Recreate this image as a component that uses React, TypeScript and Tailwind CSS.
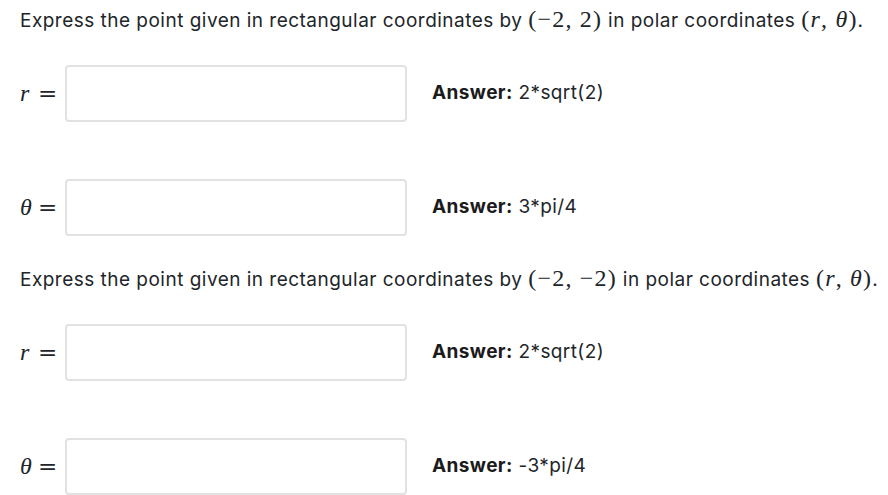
import React from "react";

const M = ({ children }: { children: React.ReactNode }) => (
  <span className="text-[24px] leading-none tracking-[1.2px]" style={{ fontFamily: '"Liberation Serif", serif' }}>
    {children}
  </span>
);
const I = ({ children }: { children: React.ReactNode }) => <i>{children}</i>;

function Label({ sym }: { sym: string }) {
  return (
    <div className="w-[45px] flex items-center text-[#212529]">
      <span className="text-[24px] italic w-[18px]" style={{ fontFamily: '"Liberation Serif", serif' }}>
        {sym}
      </span>
      <span className="text-[23px] leading-none" style={{ fontFamily: '"DejaVu Serif", serif' }}>
        =
      </span>
    </div>
  );
}

function Row({ sym, answer }: { sym: string; answer: string }) {
  return (
    <div className="flex items-center h-[56px]">
      <Label sym={sym} />
      <input
        className="w-[342px] h-[57px] border-2 border-[#e2e2e2] rounded-[4px] bg-white outline-none"
        type="text"
      />
      <div className="ml-[25px] text-[19px] tracking-[0.4px] text-[#212529]">
        <span className="font-bold text-[#1b1b1b]">Answer:</span> {answer}
      </div>
    </div>
  );
}

function Problem({ point, rows }: { point: React.ReactNode; rows: [string, string][] }) {
  return (
    <div className="flex flex-col">
      <p className="text-[19px] tracking-[0.48px] leading-[27px] text-[#212529] whitespace-nowrap">
        Express the point given in rectangular coordinates by <M>{point}</M> in polar coordinates{" "}
        <M>
          (<I>r</I>, <I>θ</I>)
        </M>
        .
      </p>
      <div className="mt-[31px] flex flex-col gap-[58px]">
        {rows.map(([l, a], i) => (
          <Row key={i} sym={l} answer={a} />
        ))}
      </div>
    </div>
  );
}

export default function App() {
  return (
    <div
      className="bg-white w-[888px] h-[495px] overflow-hidden pl-[20px] pt-[7px] flex flex-col gap-[31px]"
      style={{ fontFamily: "Inter, sans-serif" }}
    >
      <Problem
        point={<>(−2, 2)</>}
        rows={[
          ["r", "2*sqrt(2)"],
          ["θ", "3*pi/4"],
        ]}
      />
      <Problem
        point={<>(−2, −2)</>}
        rows={[
          ["r", "2*sqrt(2)"],
          ["θ", "-3*pi/4"],
        ]}
      />
    </div>
  );
}
